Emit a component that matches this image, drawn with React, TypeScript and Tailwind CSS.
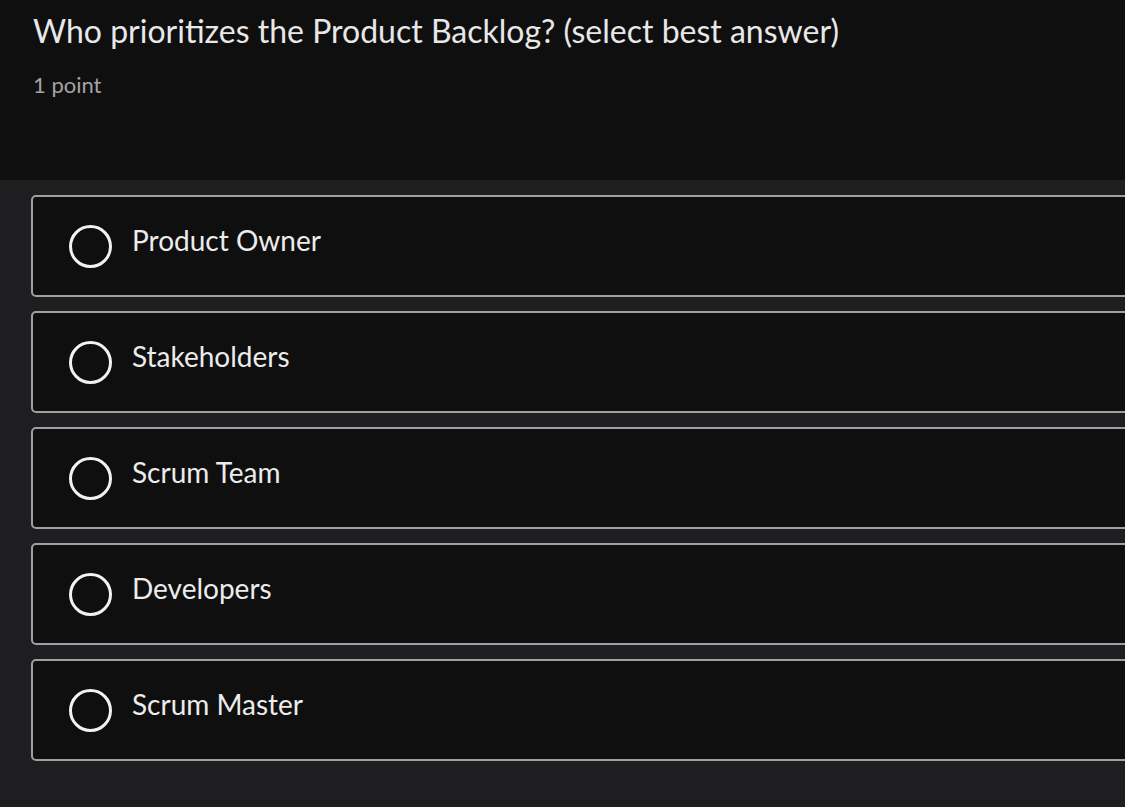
const options = [
  "Product Owner",
  "Stakeholders",
  "Scrum Team",
  "Developers",
  "Scrum Master",
];

function Radio() {
  return (
    <span className="w-[43px] h-[43px] rounded-full border-[3px] border-[#f2f2f2] shrink-0" />
  );
}

export default function App() {
  return (
    <div className="min-h-screen bg-[#1e1e20] font-['Lato',sans-serif] overflow-hidden">
      <header className="bg-[#0f0f0f] h-[180px] pl-[33px] pt-[11px]">
        <h1 className="text-[32px] text-[#e8e8e8] leading-[40px] whitespace-nowrap">
          Who prioritizes the Product Backlog? (select best answer)
        </h1>
        <p className="mt-[20px] text-[22px] text-[#a3a3a3] leading-[28px]">1 point</p>
      </header>

      <main className="pl-[31px] pt-[15px] flex flex-col gap-[14px]">
        {options.map((o) => (
          <label
            key={o}
            className="w-[1110px] h-[102px] flex items-center gap-[20px] pl-[36px] bg-[#0f0f0f] border-2 border-[#a0a0a4] rounded-[5px] cursor-pointer"
          >
            <Radio />
            <span className="pb-[13px] text-[28px] text-[#ececec] whitespace-nowrap">{o}</span>
          </label>
        ))}
      </main>
    </div>
  );
}
